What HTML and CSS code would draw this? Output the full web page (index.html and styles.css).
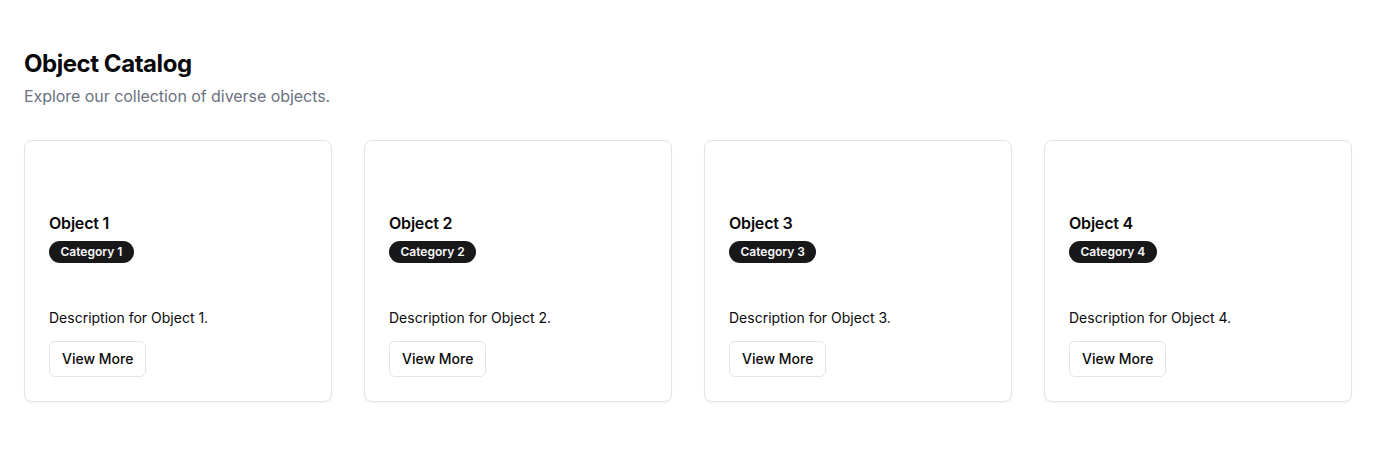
FILE: index.html
```html
<!DOCTYPE html>
<html lang="en">
<head>
<meta charset="utf-8">
<title>Object Catalog</title>
<link rel="stylesheet" href="styles.css">
</head>
<body>
<main class="page">
  <h1 class="title">Object Catalog</h1>
  <p class="subtitle">Explore our collection of diverse objects.</p>
  <div class="grid">
    <div class="card">
      <div class="media"></div>
      <h3 class="card-title">Object 1</h3>
      <span class="badge">Category 1</span>
      <p class="desc">Description for Object 1.</p>
      <button class="btn">View More</button>
    </div>
    <div class="card">
      <div class="media"></div>
      <h3 class="card-title">Object 2</h3>
      <span class="badge">Category 2</span>
      <p class="desc">Description for Object 2.</p>
      <button class="btn">View More</button>
    </div>
    <div class="card">
      <div class="media"></div>
      <h3 class="card-title">Object 3</h3>
      <span class="badge">Category 3</span>
      <p class="desc">Description for Object 3.</p>
      <button class="btn">View More</button>
    </div>
    <div class="card">
      <div class="media"></div>
      <h3 class="card-title">Object 4</h3>
      <span class="badge">Category 4</span>
      <p class="desc">Description for Object 4.</p>
      <button class="btn">View More</button>
    </div>
  </div>
</main>
</body>
</html>
```
FILE: styles.css
```css
* { box-sizing: border-box; }
html, body { margin: 0; padding: 0; background: #ffffff; }
body {
  font-family: Inter, "Noto Sans", sans-serif;
  color: #09090b;
}
.page {
  padding: 48px 24px;
}
.title {
  margin: 0;
  font-size: 24px;
  line-height: 32px;
  font-weight: 700;
  letter-spacing: -0.45px;
}
.subtitle {
  margin: 4px 0 0;
  font-size: 16px;
  line-height: 24px;
  color: #6b7280;
  letter-spacing: -0.05px;
}
.grid {
  margin-top: 32px;
  display: grid;
  grid-template-columns: repeat(4, 1fr);
  gap: 32px;
}
.card {
  border: 1px solid #e4e4e7;
  border-radius: 8px;
  background: #fff;
  box-shadow: 0 1px 2px rgba(0,0,0,0.05);
  padding: 24px;
  display: flex;
  flex-direction: column;
  align-items: flex-start;
}
.media {
  height: 46px;
  width: 100%;
}
.card-title {
  margin: 0;
  font-size: 16px;
  line-height: 24px;
  font-weight: 600;
  letter-spacing: -0.2px;
}
.badge {
  margin-top: 6px;
  display: inline-flex;
  align-items: center;
  border-radius: 9999px;
  background: #18181b;
  color: #fafafa;
  font-size: 12px;
  line-height: 16px;
  font-weight: 600;
  padding: 3px 11.5px;
}
.desc {
  margin: 45px 0 0;
  font-size: 14px;
  line-height: 20px;
}
.btn {
  margin-top: 13px;
  height: 36px;
  padding: 0 12px 2px;
  border: 1px solid #e4e4e7;
  border-radius: 6px;
  background: #fff;
  font-family: inherit;
  font-size: 14px;
  font-weight: 500;
  color: #09090b;
  cursor: pointer;
}
```
